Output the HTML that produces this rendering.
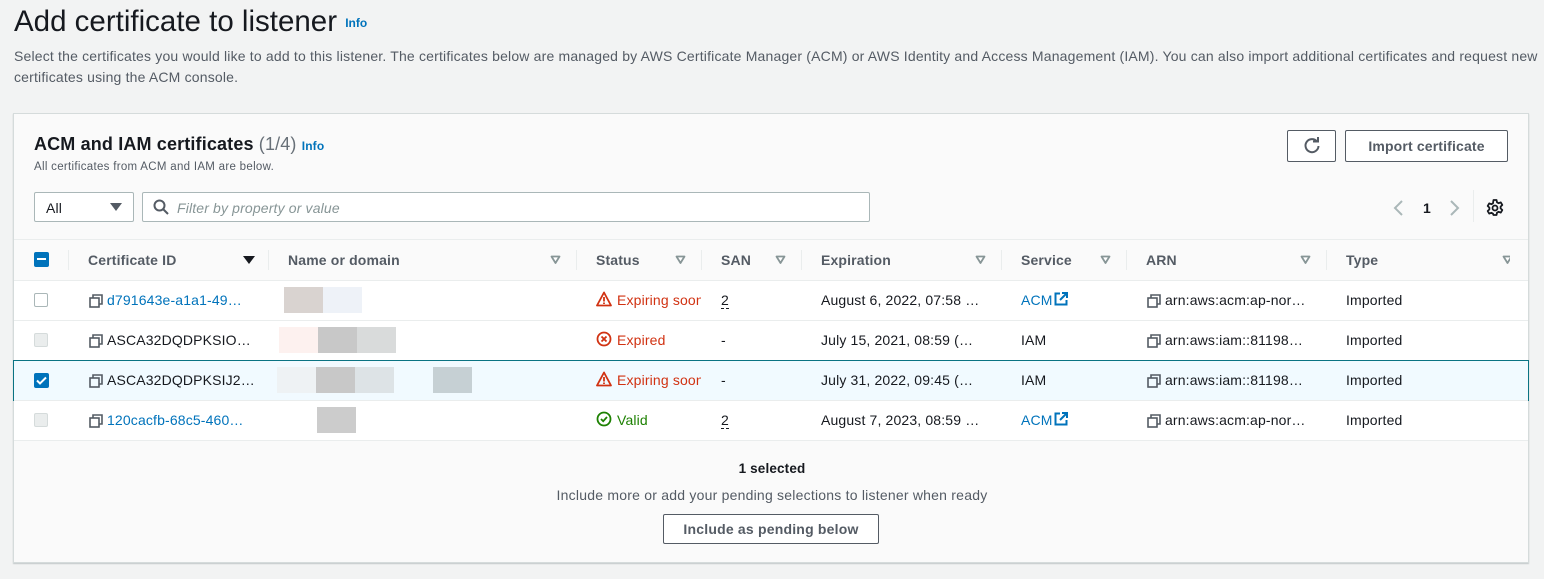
<!DOCTYPE html>
<html><head><meta charset="utf-8"><style>
*{box-sizing:border-box;margin:0;padding:0}
body{width:1544px;height:579px;background:#f2f3f3;font-family:"Liberation Sans",sans-serif;color:#16191f;position:relative;overflow:hidden;font-size:14px;letter-spacing:0.15px}
.a{position:absolute;white-space:nowrap}
.link{color:#0073bb}
.info{color:#0073bb;font-weight:bold;font-size:12px}
.panel{position:absolute;left:13px;top:113px;width:1516px;height:450px;background:#fafafa;border:1px solid #d5dbdb;box-shadow:0 1px 1px rgba(0,28,36,.2)}
.row{position:absolute;left:14px;width:1514px;height:40px;background:#fff;border-top:1px solid #eaeded}
.th{font-weight:bold;color:#545b64;font-size:14px}
.div{position:absolute;width:1px;height:20px;background:#eaeded;top:250px}
.cb{position:absolute;width:14px;height:14px;border:1px solid #aab7b8;border-radius:2px;background:#fff}
.cbd{background:#eaeded;border-color:#d5dbdb}
.btn{position:absolute;border:1px solid #545b64;border-radius:2px;background:#fff;font-weight:bold;color:#545b64;text-align:center}
.red{color:#d13212}.grn{color:#1d8102}
.blur{position:absolute;height:26px}
</style></head><body>
<div class="a" style="left:14px;top:5px;font-size:29.5px;color:#16191f;letter-spacing:0">Add certificate to listener <span class="info" style="font-size:12px;vertical-align:4px">Info</span></div>
<div class="a" style="left:14px;top:46px;color:#545b64;font-size:14px;line-height:21px;letter-spacing:0.18px">Select the certificates you would like to add to this listener. The certificates below are managed by AWS Certificate Manager (ACM) or AWS Identity and Access Management (IAM). You can also import additional certificates and request new<br>certificates using the ACM console.</div>
<div class="panel"></div>
<div class="a" style="left:34px;top:134px;font-size:18px;font-weight:bold">ACM and IAM certificates <span style="font-weight:normal;color:#687078">(1/4)</span> <span class="info">Info</span></div>
<div class="a" style="left:34px;top:161px;font-size:11.5px;color:#545b64;letter-spacing:0.3px">All certificates from ACM and IAM are below.</div>
<div class="btn" style="left:1287px;top:130px;width:49px;height:32px"><svg width="20" height="20" viewBox="0 0 20 20" style="margin-top:5px"><path d="M15 5.5A6.5 6.5 0 1 0 16.5 10" fill="none" stroke="#545b64" stroke-width="2"/><path d="M11 5.5h5V1" fill="none" stroke="#545b64" stroke-width="2"/></svg></div>
<div class="btn" style="left:1345px;top:130px;width:163px;height:32px;line-height:30px">Import certificate</div>
<div class="a" style="left:34px;top:192px;width:100px;height:30px;border:1px solid #aab7b8;border-radius:2px;background:#fff;padding:7px 11px">All<span style="position:absolute;left:75px;top:10px;border-left:6px solid transparent;border-right:6px solid transparent;border-top:8px solid #545b64"></span></div>
<div class="a" style="left:142px;top:192px;width:728px;height:30px;border:1px solid #aab7b8;border-radius:2px;background:#fff"><svg width="16" height="16" viewBox="0 0 16 16" style="position:absolute;left:10px;top:6px"><circle cx="6.5" cy="6.5" r="5" fill="none" stroke="#545b64" stroke-width="2"/><path d="M10 10l5 5" stroke="#545b64" stroke-width="2"/></svg><span style="position:absolute;left:34px;top:7px;font-style:italic;color:#879596">Filter by property or value</span></div>
<svg class="a" style="left:1392px;top:199px" width="14" height="18"><path d="M10 2L3 9l7 7" fill="none" stroke="#aab7b8" stroke-width="2"/></svg>
<div class="a" style="left:1423px;top:200px;font-weight:bold">1</div>
<svg class="a" style="left:1447px;top:199px" width="14" height="18"><path d="M4 2l7 7-7 7" fill="none" stroke="#aab7b8" stroke-width="2"/></svg>
<div class="a" style="left:1473px;top:190px;width:1px;height:32px;background:#eaeded"></div>
<svg class="a" style="left:1485px;top:198px" width="20" height="20" viewBox="0 0 20 20"><path d="M8.5 2h3l.5 2.3 1.6.9 2.2-.8 1.5 2.6-1.7 1.6v1.8l1.7 1.6-1.5 2.6-2.2-.8-1.6.9-.5 2.3h-3L8 15.7l-1.6-.9-2.2.8-1.5-2.6 1.7-1.6V9.6L2.7 8l1.5-2.6 2.2.8L8 5.3z" fill="none" stroke="#16191f" stroke-width="1.8" stroke-linejoin="round"/><circle cx="10" cy="10" r="2.5" fill="none" stroke="#16191f" stroke-width="1.8"/></svg>
<div class="a" style="left:14px;top:239px;width:1514px;height:1px;background:#eaeded"></div>
<div class="row" style="top:280px"></div>
<div class="row" style="top:320px"></div>
<div class="row" style="top:360px;background:#f1faff;border:1px solid #0a7383;height:41px;left:13px;width:1516px"></div>
<div class="row" style="top:400px"></div>
<div class="a" style="left:14px;top:440px;width:1514px;height:1px;background:#eaeded"></div>
<div class="a" style="left:34px;top:252px;width:15px;height:15px;background:#0073bb;border-radius:2px"><div style="position:absolute;left:3px;top:6px;width:9px;height:2px;background:#fff"></div></div>
<div class="div" style="left:68px"></div><div class="div" style="left:268px"></div><div class="div" style="left:576px"></div><div class="div" style="left:701px"></div><div class="div" style="left:801px"></div><div class="div" style="left:1001px"></div><div class="div" style="left:1126px"></div><div class="div" style="left:1326px"></div>
<div class="a th" style="left:88px;top:252px">Certificate ID</div>
<div class="a" style="left:243px;top:256px;border-left:6px solid transparent;border-right:6px solid transparent;border-top:8px solid #16191f"></div>
<div class="a th" style="left:288px;top:252px">Name or domain</div>
<div class="a th" style="left:596px;top:252px">Status</div>
<div class="a th" style="left:721px;top:252px">SAN</div>
<div class="a th" style="left:821px;top:252px">Expiration</div>
<div class="a th" style="left:1021px;top:252px">Service</div>
<div class="a th" style="left:1146px;top:252px">ARN</div>
<div class="a th" style="left:1346px;top:252px">Type</div>
<svg class="a" style="left:550px;top:255px" width="960" height="10">
<g fill="#fff" stroke="#879596" stroke-width="1.8" stroke-linejoin="round"><path d="M1.5 1.5h8l-4 6.5z"/><path d="M126.5 1.5h8l-4 6.5z"/><path d="M226.5 1.5h8l-4 6.5z"/><path d="M426.5 1.5h8l-4 6.5z"/><path d="M551.5 1.5h8l-4 6.5z"/><path d="M751.5 1.5h8l-4 6.5z"/><path d="M953.5 1.5h8l-4 6.5z"/></g></svg>
<div class="cb" style="left:34px;top:293px"></div>
<div class="cb cbd" style="left:34px;top:333px"></div>
<div class="a" style="left:34px;top:373px;width:15px;height:15px;background:#0073bb;border-radius:2px"><svg width="15" height="15"><path d="M3 7.5l3 3 6-6" fill="none" stroke="#fff" stroke-width="2"/></svg></div>
<div class="cb cbd" style="left:34px;top:413px"></div>
<svg style="display:none"><symbol id="cp" viewBox="0 0 14 14"><path d="M4 4V1h9v9h-3" fill="none" stroke="#545b64" stroke-width="1.6"/><rect x="1" y="4" width="9" height="9" fill="none" stroke="#545b64" stroke-width="1.6"/></symbol>
<symbol id="ext" viewBox="0 0 14 14"><path d="M6 1.5H1.5v11h11V8M8 1h5v5M13 1L6 8" fill="none" stroke="#0073bb" stroke-width="2"/></symbol>
<symbol id="warn" viewBox="0 0 16 16"><path d="M8 1.5L1 14.5h14z" fill="none" stroke="#d13212" stroke-width="1.8" stroke-linejoin="round"/><path d="M8 6v4.5M8 11.5v1.5" stroke="#d13212" stroke-width="1.8"/></symbol></svg>
<svg class="a" style="left:89px;top:294px" width="14" height="14"><use href="#cp"/></svg><div class="a link" style="left:107px;top:292px">d791643e-a1a1-49…</div>
<svg class="a" style="left:89px;top:334px" width="14" height="14"><use href="#cp"/></svg><div class="a" style="left:107px;top:332px">ASCA32DQDPKSIO…</div>
<svg class="a" style="left:89px;top:374px" width="14" height="14"><use href="#cp"/></svg><div class="a" style="left:107px;top:372px">ASCA32DQDPKSIJ2…</div>
<svg class="a" style="left:89px;top:414px" width="14" height="14"><use href="#cp"/></svg><div class="a link" style="left:107px;top:412px">120cacfb-68c5-460…</div>
<div class="blur" style="left:284px;top:287px;width:39px;background:#d9d3d0"></div><div class="blur" style="left:323px;top:287px;width:39px;background:#eef2f8"></div>
<div class="blur" style="left:279px;top:327px;width:39px;background:#fdf1ef"></div><div class="blur" style="left:318px;top:327px;width:39px;background:#c8c8c8"></div><div class="blur" style="left:357px;top:327px;width:39px;background:#d9dbdb"></div>
<div class="blur" style="left:277px;top:367px;width:39px;background:#eef2f4"></div><div class="blur" style="left:316px;top:367px;width:39px;background:#c8c8c8"></div><div class="blur" style="left:355px;top:367px;width:39px;background:#dde3e6"></div><div class="blur" style="left:433px;top:367px;width:39px;background:#c6d0d4"></div>
<div class="blur" style="left:317px;top:407px;width:39px;background:#cccccc"></div>
<svg class="a" style="left:596px;top:291px" width="16" height="16"><use href="#warn"/></svg><div class="a red" style="left:617px;top:292px;width:84px;overflow:hidden">Expiring soon</div>
<svg class="a" style="left:596px;top:331px" width="16" height="16"><circle cx="8" cy="8" r="6.5" fill="none" stroke="#d13212" stroke-width="1.8"/><path d="M5.5 5.5l5 5M10.5 5.5l-5 5" stroke="#d13212" stroke-width="1.8"/></svg><div class="a red" style="left:617px;top:332px">Expired</div>
<svg class="a" style="left:596px;top:371px" width="16" height="16"><use href="#warn"/></svg><div class="a red" style="left:617px;top:372px;width:84px;overflow:hidden">Expiring soon</div>
<svg class="a" style="left:596px;top:411px" width="16" height="16"><circle cx="8" cy="8" r="6.5" fill="none" stroke="#1d8102" stroke-width="1.8"/><path d="M5 8l2.2 2.2L11 6" fill="none" stroke="#1d8102" stroke-width="1.8"/></svg><div class="a grn" style="left:617px;top:412px">Valid</div>
<div class="a" style="left:721px;top:292px;border-bottom:1px dashed #16191f;line-height:16px">2</div>
<div class="a" style="left:721px;top:332px">-</div><div class="a" style="left:721px;top:372px">-</div>
<div class="a" style="left:721px;top:412px;border-bottom:1px dashed #16191f;line-height:16px">2</div>
<div class="a" style="left:821px;top:292px">August 6, 2022, 07:58 …</div>
<div class="a" style="left:821px;top:332px">July 15, 2021, 08:59 (…</div>
<div class="a" style="left:821px;top:372px">July 31, 2022, 09:45 (…</div>
<div class="a" style="left:821px;top:412px">August 7, 2023, 08:59 …</div>
<div class="a link" style="left:1021px;top:292px">ACM</div><svg class="a" style="left:1054px;top:292px" width="14" height="14"><use href="#ext"/></svg>
<div class="a" style="left:1021px;top:332px">IAM</div><div class="a" style="left:1021px;top:372px">IAM</div>
<div class="a link" style="left:1021px;top:412px">ACM</div><svg class="a" style="left:1054px;top:412px" width="14" height="14"><use href="#ext"/></svg>
<svg class="a" style="left:1147px;top:294px" width="14" height="14"><use href="#cp"/></svg><div class="a" style="left:1165px;top:292px">arn:aws:acm:ap-nor…</div>
<svg class="a" style="left:1147px;top:334px" width="14" height="14"><use href="#cp"/></svg><div class="a" style="left:1165px;top:332px">arn:aws:iam::81198…</div>
<svg class="a" style="left:1147px;top:374px" width="14" height="14"><use href="#cp"/></svg><div class="a" style="left:1165px;top:372px">arn:aws:iam::81198…</div>
<svg class="a" style="left:1147px;top:414px" width="14" height="14"><use href="#cp"/></svg><div class="a" style="left:1165px;top:412px">arn:aws:acm:ap-nor…</div>
<div class="a" style="left:1346px;top:292px">Imported</div><div class="a" style="left:1346px;top:332px">Imported</div><div class="a" style="left:1346px;top:372px">Imported</div><div class="a" style="left:1346px;top:412px">Imported</div>
<div class="a" style="left:0;width:1544px;text-align:center;top:461px;font-weight:bold;font-size:13.5px">1 selected</div>
<div class="a" style="left:0;width:1544px;text-align:center;top:487px;color:#545b64;font-size:14px;letter-spacing:0.22px">Include more or add your pending selections to listener when ready</div>
<div class="btn" style="left:663px;top:514px;width:216px;height:30px;line-height:28px;color:#545b64;font-size:14px;letter-spacing:0.2px">Include as pending below</div>
</body></html>
